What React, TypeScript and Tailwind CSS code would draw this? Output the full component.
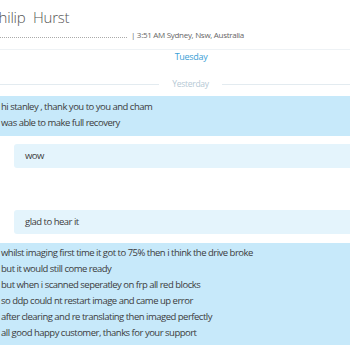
import React from 'react';

const bigMessage = [
  'whilst imaging first time it got to 75% then i think the drive broke',
  'but it would still come ready',
  'but when i scanned seperatley on frp all red blocks',
  'so ddp could nt restart image and came up error',
  'after clearing and re translating then imaged perfectly',
  'all good happy customer, thanks for your support',
];

const Incoming: React.FC<{ lines: string[]; className?: string }> = ({ lines, className = '' }) => (
  <div className={`bg-[#c7e9fa] pl-[1px] ${className}`}>
    {lines.map((line) => (
      <p key={line} className="leading-[16px]">{line}</p>
    ))}
  </div>
);

const Outgoing: React.FC<{ text: string }> = ({ text }) => (
  <div className="ml-[14px] h-[24px] rounded-l-[3px] bg-[#e4f4fc] pl-[11px] flex items-center">
    <p>{text}</p>
  </div>
);

export default function App() {
  return (
    <div
      className="w-[350px] h-[350px] overflow-hidden bg-white text-[9.5px] tracking-[-0.5px] text-[#3c3c3c]"
      style={{ fontFamily: '"Open Sans", "Noto Sans", sans-serif' }}
    >
      {/* header */}
      <div className="h-[50px] border-b border-[#eef2f5]">
        <h1 className="-ml-[10px] pt-[7px] text-[15px] font-light tracking-[-0.2px] leading-[20px] text-[#555] whitespace-pre">Philip  Hurst</h1>
        <div className="flex items-center mt-[2px] text-[8px] tracking-[-0.3px] text-[#666]">
          <span className="w-[127px] border-b border-dotted border-[#aaa] mt-[4px]" />
          <span className="ml-[4px]">| 3:51 AM Sydney, Nsw, Australia</span>
        </div>
      </div>

      <p className="text-center pl-[32px] mt-[1px] leading-[12px] text-[9px] tracking-[-0.3px] text-[#3ba0d6]">Tuesday</p>

      {/* day separator */}
      <div className="flex items-center mt-[15px] h-[12px] text-[8.5px] tracking-[-0.3px]">
        <div className="w-[159px] border-t border-[#e3ebf0]" />
        <span className="mx-auto text-[#b6c9d5]">Yesterday</span>
        <div className="w-[128px] border-t border-[#e3ebf0]" />
      </div>

      <div className="mt-[6px] flex flex-col">
        <Incoming className="pt-[3px] pb-[5px]" lines={['hi stanley , thank you to you and cham', 'was able to make full recovery']} />
        <div className="mt-[8px]">
          <Outgoing text="wow" />
        </div>
        <div className="mt-[42px]">
          <Outgoing text="glad to hear it" />
        </div>
        <Incoming className="mt-[9px] pt-[2px] pb-[4px]" lines={bigMessage} />
      </div>
    </div>
  );
}
